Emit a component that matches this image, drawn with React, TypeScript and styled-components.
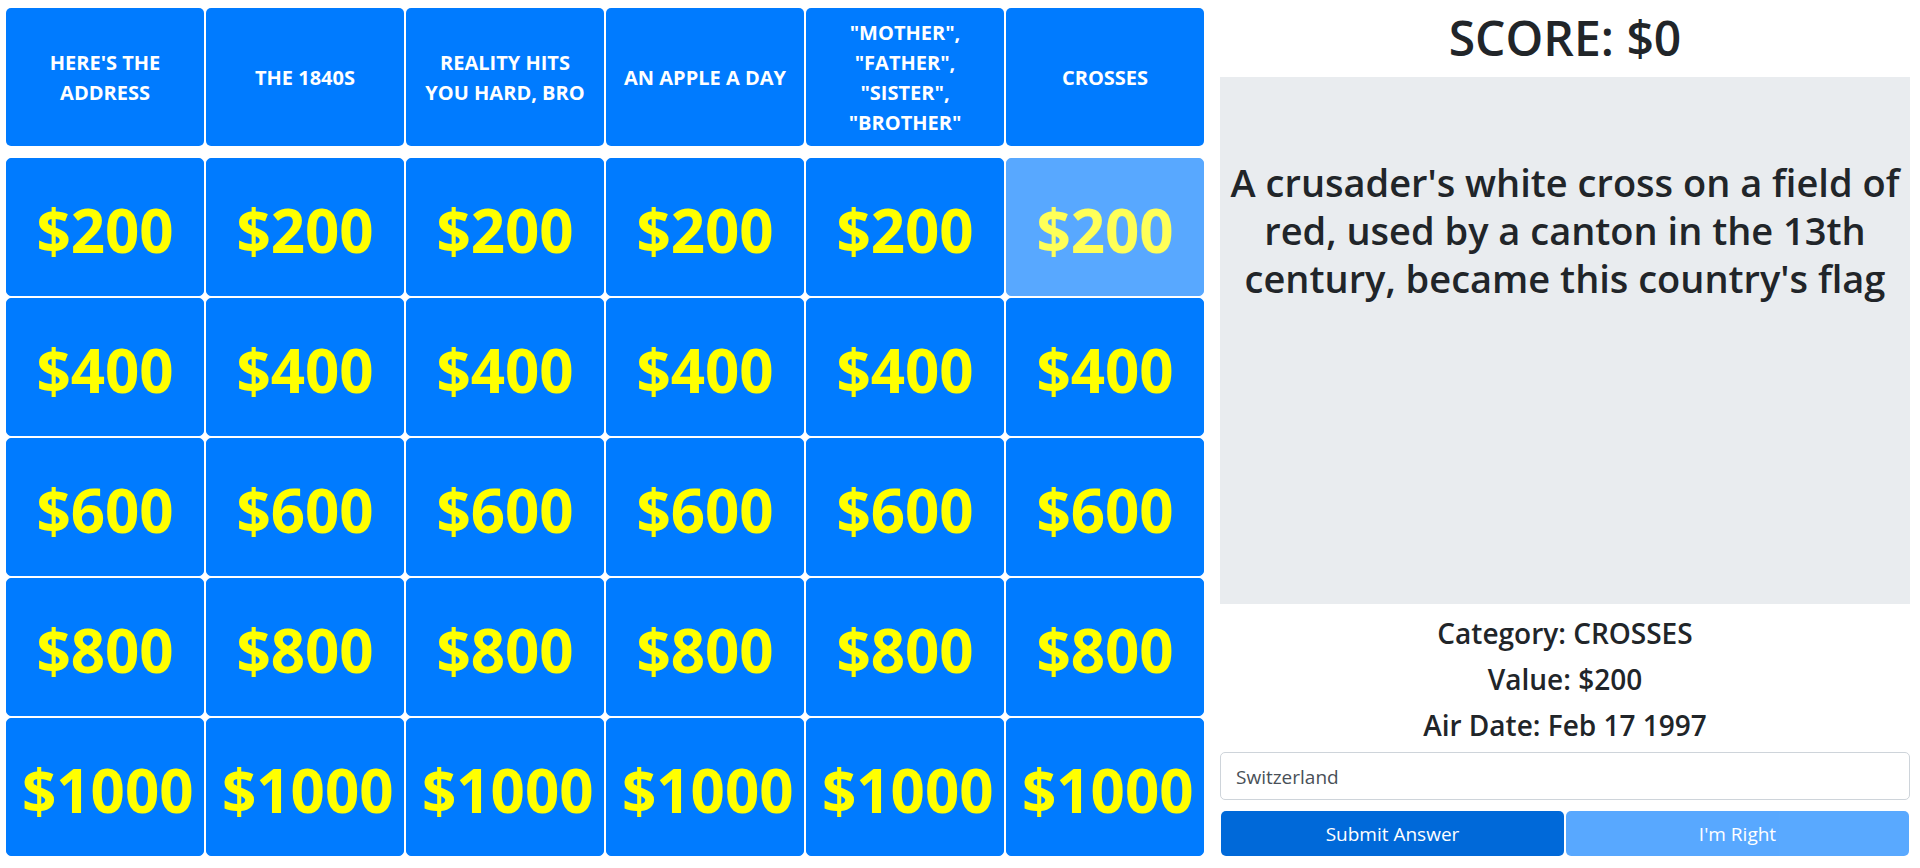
import React, { useState } from "react";
import styled, { createGlobalStyle } from "styled-components";

const GlobalStyle = createGlobalStyle`
  *, *::before, *::after { box-sizing: border-box; }
  body {
    margin: 0;
    background: #fff;
    color: #212529;
    font-family: "Segoe UI", "Open Sans", "Noto Sans", sans-serif;
    font-size: 20px;
    line-height: 30px;
  }
`;

const Page = styled.main`
  display: grid;
  grid-template-columns: minmax(0, 40fr) minmax(0, 23fr);
  gap: 15px;
  padding: 7px 10px 10px 5px;
`;

const Board = styled.section`
  display: flex;
  flex-direction: column;
  gap: 10px;
`;

const TileGrid = styled.div`
  display: grid;
  grid-template-columns: repeat(6, minmax(0, 1fr));
  gap: 2px;
  padding: 1px;
`;

const CategoryTile = styled.h2`
  display: flex;
  align-items: center;
  justify-content: center;
  min-height: 138px;
  margin: 0;
  padding: 9px 16px 7px;
  border-radius: 5px;
  background: #007bff;
  color: #fff;
  font-size: 20px;
  line-height: 30px;
  font-weight: 700;
  text-align: center;
`;

const Button = styled.button`
  padding: 7px 15px;
  border: 1px solid transparent;
  border-radius: 5px;
  background: #007bff;
  color: #fff;
  font: inherit;
  cursor: pointer;

  &:disabled {
    opacity: 0.65;
    cursor: default;
  }
`;

const ValueTile = styled(Button)`
  min-height: 138px;
  padding: 10px 15px 4px;
  border-color: #007bff;
  color: #ff0;
  font-size: 60px;
  line-height: 90px;
  font-weight: 700;
`;

const Panel = styled.section`
  display: flex;
  flex-direction: column;
  gap: 10px;
  text-align: center;
`;

const Score = styled.h1`
  margin: 0;
  padding-top: 2px;
  font-size: 48px;
  line-height: 58px;
  font-weight: 600;
`;

const Clue = styled.div`
  flex: 1;
  padding: 81px 10px 10px;
  background: #e9ecef;
`;

const ClueText = styled.h2`
  margin: 0;
  font-size: 38px;
  line-height: 48px;
  font-weight: 600;
`;

const Detail = styled.h3`
  margin: 0;
  padding-top: 2px;
  font-size: 28px;
  line-height: 34px;
  font-weight: 600;
`;

const AnswerForm = styled.form`
  display: flex;
  flex-direction: column;
  gap: 10px;
`;

const AnswerInput = styled.input`
  width: 100%;
  height: 48px;
  padding: 8px 15px 6px;
  border: 1px solid #ced4da;
  border-radius: 5px;
  background: #fff;
  color: #495057;
  font: inherit;
  font-size: 19px;
`;

const Actions = styled.div`
  display: grid;
  grid-template-columns: 1fr 1fr;
  gap: 2px;
  padding: 1px;
`;

const ActionButton = styled(Button)<{ $active?: boolean }>`
  height: 45px;
  border: 0;
  background: ${(p) => (p.$active ? "#0069d9" : "#007bff")};
  font-size: 19px;
`;

const categories = [
  "HERE'S THE ADDRESS",
  "THE 1840S",
  "REALITY HITS YOU HARD, BRO",
  "AN APPLE A DAY",
  '"MOTHER", "FATHER", "SISTER", "BROTHER"',
  "CROSSES",
];

const values = [200, 400, 600, 800, 1000];

export default function App() {
  const [answer, setAnswer] = useState("Switzerland");

  return (
    <>
      <GlobalStyle />
      <Page>
        <Board aria-label="Game board">
          <TileGrid>
            {categories.map((name) => (
              <CategoryTile key={name}>{name}</CategoryTile>
            ))}
          </TileGrid>
          <TileGrid>
            {values.flatMap((value) =>
              categories.map((name) => (
                <ValueTile
                  key={`${name}-${value}`}
                  type="button"
                  disabled={name === "CROSSES" && value === 200}
                >
                  ${value}
                </ValueTile>
              ))
            )}
          </TileGrid>
        </Board>
        <Panel aria-label="Current clue">
          <Score>SCORE: $0</Score>
          <Clue>
            <ClueText>
              A crusader's white cross on a field of red, used by a canton in the
              13th century, became this country's flag
            </ClueText>
          </Clue>
          <Detail>Category: CROSSES</Detail>
          <Detail>Value: $200</Detail>
          <Detail>Air Date: Feb 17 1997</Detail>
          <AnswerForm onSubmit={(e) => e.preventDefault()}>
            <AnswerInput
              aria-label="Your answer"
              value={answer}
              onChange={(e) => setAnswer(e.target.value)}
            />
            <Actions>
              <ActionButton type="submit" $active>
                Submit Answer
              </ActionButton>
              <ActionButton type="button" disabled>
                I'm Right
              </ActionButton>
            </Actions>
          </AnswerForm>
        </Panel>
      </Page>
    </>
  );
}
